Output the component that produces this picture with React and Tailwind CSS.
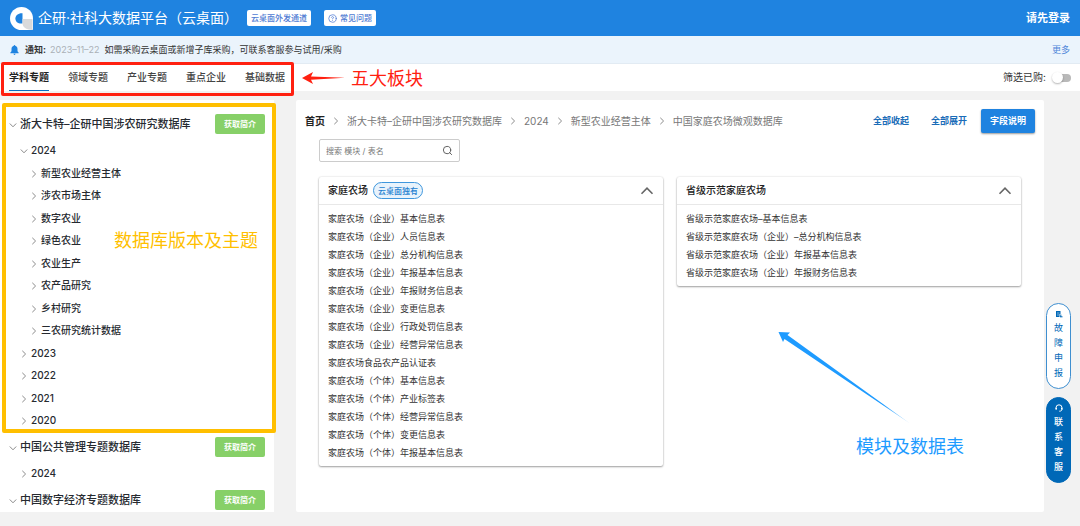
import React, { useState } from 'react';
import { Search, CircleHelp } from 'lucide-react';

const tabs = ['学科专题', '领域专题', '产业专题', '重点企业', '基础数据'];

const databases = [
  {
    name: '浙大卡特–企研中国涉农研究数据库',
    nodes: [
      { label: '2024', level: 1, open: true },
      { label: '新型农业经营主体', level: 2 },
      { label: '涉农市场主体', level: 2 },
      { label: '数字农业', level: 2 },
      { label: '绿色农业', level: 2 },
      { label: '农业生产', level: 2 },
      { label: '农产品研究', level: 2 },
      { label: '乡村研究', level: 2 },
      { label: '三农研究统计数据', level: 2 },
      { label: '2023', level: 1 },
      { label: '2022', level: 1 },
      { label: '2021', level: 1 },
      { label: '2020', level: 1 }
    ]
  },
  { name: '中国公共管理专题数据库', nodes: [{ label: '2024', level: 1 }] },
  { name: '中国数字经济专题数据库', nodes: [] }
];

const crumbs = ['浙大卡特–企研中国涉农研究数据库', '2024', '新型农业经营主体', '中国家庭农场微观数据库'];

const modules = [
  {
    title: '家庭农场',
    badge: '云桌面独有',
    tables: [
      '家庭农场（企业）基本信息表',
      '家庭农场（企业）人员信息表',
      '家庭农场（企业）总分机构信息表',
      '家庭农场（企业）年报基本信息表',
      '家庭农场（企业）年报财务信息表',
      '家庭农场（企业）变更信息表',
      '家庭农场（企业）行政处罚信息表',
      '家庭农场（企业）经营异常信息表',
      '家庭农场食品农产品认证表',
      '家庭农场（个体）基本信息表',
      '家庭农场（个体）产业标签表',
      '家庭农场（个体）经营异常信息表',
      '家庭农场（个体）变更信息表',
      '家庭农场（个体）年报基本信息表'
    ]
  },
  {
    title: '省级示范家庭农场',
    tables: [
      '省级示范家庭农场–基本信息表',
      '省级示范家庭农场（企业）–总分机构信息表',
      '省级示范家庭农场（企业）年报基本信息表',
      '省级示范家庭农场（企业）年报财务信息表'
    ]
  }
];

const Logo = () => (
  <svg width="23" height="23" viewBox="0 0 23 23" aria-hidden="true">
    <path d="M11.5 0A11.5 11.5 0 0 0 11.5 23H22a1 1 0 0 0 1-1V11.5A11.5 11.5 0 0 0 11.5 0Z" fill="#fff" />
    <path d="M12.5 6.2V16.5C8 17 5.4 14.5 5.4 11.4S8.5 5.8 12.5 6.2Z" fill="#1f83e0" />
    <path d="M12.5 12H22.5V23C17 22.8 12.5 21 12.5 16Z" fill="#d9dadb" />
  </svg>
);

const Bell = () => (
  <svg width="9" height="10" viewBox="0 0 9 10" fill="#1f83e0" aria-hidden="true">
    <path d="M4.5 0C5 0 5.2.4 5.2.8 6.7 1.2 7.5 2.4 7.5 4V6.2L8.6 7.6V8.2H.4V7.6L1.500 6.200V4C1.500 2.400 2.300 1.200 3.800.8 3.800.4 4 0 4.500 0ZM3.400 8.800H5.600C5.500 9.500 5.100 9.900 4.500 9.900S3.500 9.500 3.400 8.800Z" />
  </svg>
);

const CaretRight = () => (
  <svg width="8" height="8" viewBox="0 0 8 8" fill="none" stroke="#8a8a8a" aria-hidden="true">
    <path d="M2.300.8 5.600 4 2.300 7.200" />
  </svg>
);

const CaretDown = () => (
  <svg width="8" height="8" viewBox="0 0 8 8" fill="none" stroke="#8a8a8a" aria-hidden="true">
    <path d="M.8 2.500 4 5.800 7.200 2.500" />
  </svg>
);

const CaretUp = () => (
  <svg width="14" height="10" viewBox="0 0 14 10" fill="none" stroke="currentColor" strokeWidth="1.6" aria-hidden="true">
    <path d="M1.500 7.800 7 2.200 12.500 7.800" />
  </svg>
);

const ReportIcon = () => (
  <svg width="8" height="8" viewBox="0 0 8 8" aria-hidden="true">
    <path d="M1 1H5.500V4H4.500V7H1Z" fill="currentColor" />
    <path d="M2 3H4.500M2 5H4" stroke="#fff" strokeWidth="0.500" />
    <path d="M5.800 4.500V7M5 6.800H7.500" stroke="currentColor" fill="none" />
  </svg>
);

const HeadsetIcon = () => (
  <svg width="8" height="8" viewBox="0 0 8 8" fill="none" stroke="currentColor" aria-hidden="true">
    <path d="M1 5.400V3.800A3 3 0 0 1 7 3.800V5.200C7 6.500 6 7.200 4.300 7.200" />
    <path d="M1.300 3.800V5.600M6.700 3.800V5.600" strokeWidth="1.400" />
  </svg>
);

const Header = () => (
  <header className="flex h-9 shrink-0 items-center bg-[#1f83e0] pr-[10px] pl-[10px] text-white">
    <Logo />
    <h1 className="ml-[5px] text-sm">企研·社科大数据平台（云桌面）</h1>
    <button className="ml-[9px] h-4 rounded-xs bg-white px-1 text-[8px] font-medium text-[#4f7bd3]">云桌面外发通道</button>
    <button className="ml-[13px] flex h-4 items-center gap-[3px] rounded-xs bg-white px-1 text-[8px] font-medium text-[#4f7bd3]">
      <CircleHelp size={9} />
      常见问题
    </button>
    <a href="#login" className="ml-auto text-[11px] font-bold">请先登录</a>
  </header>
);

const Notice = () => (
  <div className="flex h-7 shrink-0 items-center border-b border-[#e2ebf3] bg-[#ebf4fc] px-[10px] pt-px text-[9px] text-[#333]">
    <Bell />
    <span className="ml-[6px] font-bold">通知:</span>
    <time className="ml-1 text-[#aab0b6]">2023–11–22</time>
    <span className="ml-[5px]">如需采购云桌面或新增子库采购，可联系客服参与试用/采购</span>
    <a href="#more" className="ml-auto text-[#4f86d9]">更多</a>
  </div>
);

const Sidebar = () => (
  <aside className="w-[274px] shrink-0 overflow-hidden bg-white pt-[9px] text-[#262a30]">
    {databases.map(db => (
      <section key={db.name}>
        <div className="flex h-[30px] items-center justify-between pr-[9px] pl-[9px]">
          <button className="flex items-center gap-[3px] pt-px text-[11px] font-medium">
            <CaretDown />
            {db.name}
          </button>
          <button className="h-5 w-[50px] rounded-xs bg-[#87d068] text-[8px] font-bold text-white">获取简介</button>
        </div>
        {db.nodes.map(node => (
          <button
            key={node.label}
            className={`flex h-[22px] w-full items-center gap-[3px] pt-px text-[10px] font-medium even:mb-px ${
              node.level === 1 ? 'pl-5' : 'pl-[30px]'
            }`}
          >
            {node.open ? <CaretDown /> : <CaretRight />}
            {node.label}
          </button>
        ))}
      </section>
    ))}
  </aside>
);

const ModuleCard = ({ module }) => (
  <section className="rounded-xs bg-white shadow-[0_1px_2px_rgba(0,0,0,0.35),0_0_2px_rgba(0,0,0,0.15)]">
    <div className="flex h-7 items-center border-b border-[#e8e8e8] px-[9px]">
      <h2 className="text-[10px] font-medium text-[#222]">{module.title}</h2>
      {module.badge && (
        <span className="ml-[5px] flex h-[17px] items-center rounded-full border border-[#3f97dd] bg-[#e8f3fc] px-1 text-[8px] font-medium text-[#1f7fd0]">
          {module.badge}
        </span>
      )}
      <button aria-label="收起" className="ml-auto text-[#666]">
        <CaretUp />
      </button>
    </div>
    <ul className="px-[9px] pt-[5px] pb-1 text-[9px] leading-[18px] text-[#333]">
      {module.tables.map(table => (
        <li key={table}>{table}</li>
      ))}
    </ul>
  </section>
);

const SideButton = ({ icon, text, className }) => (
  <button className={`flex w-[25px] flex-col items-center rounded-full border pt-[6px] pb-2 text-[9px] leading-[14px] ${className}`}>
    {icon}
    <span className="mt-[3px] flex flex-col gap-px">
      {text.split('').map(char => (
        <span key={char}>{char}</span>
      ))}
    </span>
  </button>
);

// Hand-drawn notes that sit on top of the page
const Annotations = () => (
  <div className="pointer-events-none absolute inset-0">
    <div className="absolute top-[62px] left-[1px] h-[34px] w-[293px] rounded-xs border-3 border-[#ff2010]" />
    <svg className="absolute top-[71px] left-[302px]" width="44" height="14" viewBox="0 0 44 14" fill="#ff2010">
      <path d="M0 7 11 1 9 5.500 43 6.800 9 8.700 11 13Z" />
    </svg>
    <p className="absolute top-[66px] left-[351px] text-[18px] leading-[26px] text-[#ff2010]">五大板块</p>

    <div className="absolute top-[103px] left-[2px] h-[330px] w-[274px] rounded-xs border-4 border-[#ffbf00]" />
    <p className="absolute top-[228px] left-[114px] text-[18px] leading-[26px] text-[#ffbf00]">数据库版本及主题</p>

    <svg className="absolute top-[331px] left-[778px]" width="134" height="94" viewBox="0 0 134 94">
      <defs>
        <linearGradient id="tail" x1="0" y1="0" x2="1" y2="1">
          <stop offset="0.8" stopColor="#1e9bff" />
          <stop offset="1" stopColor="#1e9bff" stopOpacity="0.3" />
        </linearGradient>
      </defs>
      <path d="M.5 1 12 1.500 9.500 4 132 92.500 6.500 8 5 11Z" fill="url(#tail)" />
    </svg>
    <p className="absolute top-[434px] left-[856px] text-[18px] leading-[26px] text-[#1e9bff]">模块及数据表</p>
  </div>
);

const App = () => {
  const [activeTab, setActiveTab] = useState('学科专题');
  const [onlyBought, setOnlyBought] = useState(false);

  return (
    <div className="relative flex h-screen flex-col overflow-hidden bg-[#f2f2f2] font-['Inter','Noto_Sans_CJK_SC',sans-serif]">
      <Header />
      <Notice />

      {/* Tabs */}
      <nav className="flex h-[27px] shrink-0 items-center justify-between bg-white px-[9px] text-[10px]">
        <div className="flex h-full gap-[19px]">
          {tabs.map(tab => (
            <button
              key={tab}
              onClick={() => setActiveTab(tab)}
              className={`border-b pt-px ${
                activeTab === tab ? 'border-[#0b6fc0] font-bold text-[#222]' : 'border-transparent font-medium text-[#444]'
              }`}
            >
              {tab}
            </button>
          ))}
        </div>
        <label className="flex items-center gap-[6px] text-[#333]">
          筛选已购:
          <input
            type="checkbox"
            role="switch"
            checked={onlyBought}
            onChange={e => setOnlyBought(e.target.checked)}
            className="peer sr-only"
          />
          <span className="flex h-[11px] w-[19px] items-center peer-checked:flex-row-reverse">
            <span className="z-10 size-[11px] shrink-0 rounded-full bg-white shadow-[0_1px_2px_rgba(0,0,0,0.3)]" />
            <span className="-ml-[6px] h-2 w-[14px] shrink-0 rounded-full bg-[#b9b9b9]" />
          </span>
        </label>
      </nav>

      <div className="flex min-h-0 flex-1 gap-[22px] pt-[9px] pr-9 pb-[14px]">
        <Sidebar />

        <main className="min-w-0 flex-1 rounded-xs bg-white px-[9px] pt-[9px]">
          <div className="flex items-center text-[10px] text-[#777]">
            <a href="#home" className="font-bold text-[#222]">首页</a>
            {crumbs.map(crumb => (
              <React.Fragment key={crumb}>
                <span className="flex w-[22px] justify-center">
                  <CaretRight />
                </span>
                <a href="#crumb">{crumb}</a>
              </React.Fragment>
            ))}
            <div className="ml-auto flex items-center text-[9px] font-bold text-[#1a6cb8]">
              <button>全部收起</button>
              <button className="ml-[22px]">全部展开</button>
              <button className="ml-[14px] h-6 w-[54px] rounded-xs bg-[#1f83e0] text-white shadow-[0_1px_2px_rgba(0,0,0,0.4)]">
                字段说明
              </button>
            </div>
          </div>

          <div className="px-[14px] pt-[6px]">
            <label className="flex h-[23px] w-[141px] items-center rounded-xs border border-[#ccc] px-[6px]">
              <input
                type="text"
                aria-label="搜索"
                placeholder="搜索 模块 / 表名"
                className="min-w-0 flex-1 text-[8px] outline-none placeholder:text-[#777]"
              />
              <Search size={11} className="text-[#555]" />
            </label>
            <div className="mt-[15px] grid grid-cols-2 items-start gap-[14px]">
              {modules.map(module => (
                <ModuleCard key={module.title} module={module} />
              ))}
            </div>
          </div>
        </main>
      </div>

      <div className="absolute top-[303px] right-[9px] flex flex-col gap-2">
        <SideButton icon={<ReportIcon />} text="故障申报" className="border-[#3f8fd0] bg-white text-[#0068b7]" />
        <SideButton icon={<HeadsetIcon />} text="联系客服" className="border-[#0068b7] bg-[#0068b7] font-medium text-white" />
      </div>

      <Annotations />
    </div>
  );
};

export default App;
